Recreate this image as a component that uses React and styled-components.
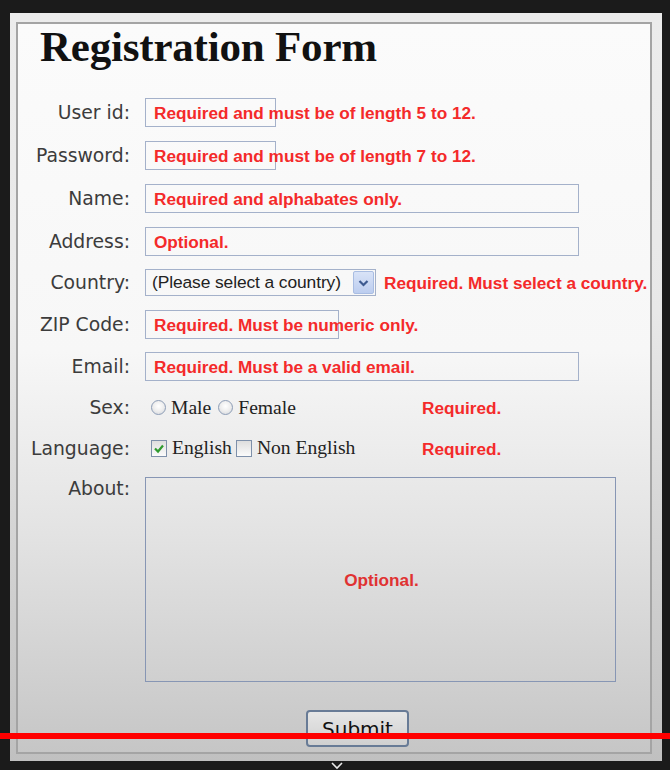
import React from "react";
import styled, { createGlobalStyle } from "styled-components";

const Global = createGlobalStyle`
  html, body { margin: 0; padding: 0; background: #1b1b1b; }
  body { width: 670px; height: 770px; overflow: hidden; position: relative; }
`;

const Frame = styled.div`
  margin: 13px 0 0 10px;
  width: 652px;
  height: 748px;
  box-sizing: border-box;
  padding: 9px 10px 7px 6px;
  background: linear-gradient(to bottom, #ececec 0%, #e8e8e8 40%, #d4d4d4 70%, #c0c0c0 100%);
`;

const Panel = styled.div`
  height: 100%;
  box-sizing: border-box;
  border: 2px solid #a4a4a4;
  background: linear-gradient(to bottom, #fbfbfb 0%, #f7f7f7 45%, #e3e3e3 70%, #c6c6c6 100%);
  display: flex;
  flex-direction: column;
`;

const Title = styled.h1`
  margin: 1px 0 0 22px;
  font-family: "Liberation Serif", "Times New Roman", serif;
  font-weight: bold;
  font-size: 43px;
  line-height: 43px;
  color: #111;
  letter-spacing: -0.2px;
`;

const Rows = styled.div`
  margin-top: 23px;
  display: flex;
  flex-direction: column;
`;

const Row = styled.div`
  display: grid;
  grid-template-columns: 112px 1fr;
  column-gap: 15px;
  align-items: ${(p) => (p.$top ? "start" : "center")};
  height: ${(p) => (p.$h ? `${p.$h}px` : "auto")};
  margin-top: ${(p) => p.$mt || 0}px;
`;

const Label = styled.div`
  text-align: right;
  font-family: "DejaVu Sans", Verdana, sans-serif;
  font-size: 18.8px;
  color: #3c3c3c;
  white-space: nowrap;
`;

const Hint = styled.span`
  font-family: "Liberation Sans", Arial, sans-serif;
  font-weight: bold;
  font-size: 17.2px;
  color: ${(p) => p.$color || "#f42a2a"};
  white-space: nowrap;
  position: relative;
  top: 1px;
`;

const InputBox = styled.div`
  width: ${(p) => p.$w}px;
  height: 29px;
  box-sizing: border-box;
  border: 1px solid #a4b1ca;
  padding-left: 8px;
  display: flex;
  align-items: center;
  overflow: visible;
`;

const Inline = styled.div`
  display: flex;
  align-items: center;
  gap: ${(p) => p.$gap || 0}px;
`;

const SelectBox = styled.div`
  width: 231px;
  height: 27px;
  box-sizing: border-box;
  border: 1px solid #a4b1ca;
  display: flex;
  align-items: center;
  justify-content: space-between;
  padding: 0 1px 0 6px;
  font-family: "Liberation Sans", Arial, sans-serif;
  font-size: 17.4px;
  letter-spacing: -0.1px;
  color: #222;
  white-space: nowrap;
`;

const DropButton = styled.span`
  width: 21px;
  height: 23px;
  box-sizing: border-box;
  border: 1px solid #a9bde2;
  border-radius: 2px;
  background: linear-gradient(to bottom, #d9e3f7, #bccdef);
  display: flex;
  align-items: center;
  justify-content: center;
  flex: none;
`;

const Options = styled.div`
  width: 277px;
  box-sizing: border-box;
  padding-left: 6px;
  display: flex;
  align-items: center;
`;

const OptionText = styled.span`
  font-family: "Liberation Serif", "Times New Roman", serif;
  font-size: 19.6px;
  color: #222;
  margin: 0 ${(p) => p.$mr || 0}px 0 5px;
`;

const Radio = styled.span`
  width: 15px;
  height: 15px;
  box-sizing: border-box;
  border-radius: 50%;
  border: 1.5px solid #8d9db6;
  background: radial-gradient(circle at 50% 40%, #ffffff 0%, #eeeeee 50%, #cfd3da 100%);
  flex: none;
`;

const Check = styled.span`
  width: 16px;
  height: 17px;
  box-sizing: border-box;
  border: 1.5px solid #7e90aa;
  background: linear-gradient(to bottom, #dedede, #fbfbfb);
  display: flex;
  align-items: center;
  justify-content: center;
  flex: none;
`;

const AboutLabel = styled(Label)`
  padding-top: 1px;
`;

const TextArea = styled.div`
  width: 471px;
  height: 205px;
  box-sizing: border-box;
  border: 1px solid #8796b4;
  display: flex;
  align-items: center;
  justify-content: center;
  padding-left: 2px;
`;

const ButtonRow = styled.div`
  margin-top: 28px;
  padding-left: 288px;
`;

const SubmitButton = styled.button`
  width: 103px;
  height: 37px;
  box-sizing: border-box;
  border: 2px solid #687b96;
  border-radius: 4px;
  background: linear-gradient(to bottom, #e6e6e6, #d0d0d0);
  font-family: "DejaVu Sans", Verdana, sans-serif;
  font-size: 20px;
  color: #111;
  padding: 0;
`;

const ProgressBar = styled.div`
  position: absolute;
  left: 0;
  top: 733px;
  width: 670px;
  height: 6px;
  background: #ff0000;
`;

const CloseMark = styled.svg`
  position: absolute;
  left: 330px;
  top: 762px;
`;

const Chevron = () => (
  <svg width="11" height="8" viewBox="0 0 11 8">
    <path d="M1.5 2 L5.5 6 L9.5 2" fill="none" stroke="#3d5a90" strokeWidth="2.2" />
  </svg>
);

const CheckMark = () => (
  <svg width="12" height="11" viewBox="0 0 12 11">
    <path d="M2 5.5 L5 8.5 L10 2.5" fill="none" stroke="#2f9a2f" strokeWidth="2.2" />
  </svg>
);

const textRows = [
  { label: "User id:", w: 131, h: 43, hint: "Required and must be of length 5 to 12." },
  { label: "Password:", w: 131, h: 43, hint: "Required and must be of length 7 to 12." },
  { label: "Name:", w: 434, h: 43, hint: "Required and alphabates only." },
  { label: "Address:", w: 434, h: 42, hint: "Optional." },
];

export default function App() {
  return (
    <>
      <Global />
      <Frame>
        <Panel>
          <Title>Registration Form</Title>
          <Rows>
            {textRows.map((r) => (
              <Row key={r.label} $h={r.h}>
                <Label>{r.label}</Label>
                <InputBox $w={r.w}>
                  <Hint>{r.hint}</Hint>
                </InputBox>
              </Row>
            ))}
            <Row $h={41}>
              <Label>Country:</Label>
              <Inline $gap={8}>
                <SelectBox>
                  <span>(Please select a country)</span>
                  <DropButton>
                    <Chevron />
                  </DropButton>
                </SelectBox>
                <Hint>Required. Must select a country.</Hint>
              </Inline>
            </Row>
            <Row $h={42}>
              <Label>ZIP Code:</Label>
              <InputBox $w={194}>
                <Hint>Required. Must be numeric only.</Hint>
              </InputBox>
            </Row>
            <Row $h={42}>
              <Label>Email:</Label>
              <InputBox $w={434}>
                <Hint>Required. Must be a valid email.</Hint>
              </InputBox>
            </Row>
            <Row $h={41}>
              <Label>Sex:</Label>
              <Inline>
                <Options>
                  <Radio />
                  <OptionText $mr={7}>Male</OptionText>
                  <Radio />
                  <OptionText>Female</OptionText>
                </Options>
                <Hint>Required.</Hint>
              </Inline>
            </Row>
            <Row $h={40}>
              <Label>Language:</Label>
              <Inline>
                <Options>
                  <Check>
                    <CheckMark />
                  </Check>
                  <OptionText $mr={4}>English</OptionText>
                  <Check />
                  <OptionText>Non English</OptionText>
                </Options>
                <Hint>Required.</Hint>
              </Inline>
            </Row>
            <Row $top $mt={9}>
              <AboutLabel>About:</AboutLabel>
              <TextArea>
                <Hint $color="#e03232">Optional.</Hint>
              </TextArea>
            </Row>
            <ButtonRow>
              <SubmitButton>Submit</SubmitButton>
            </ButtonRow>
          </Rows>
        </Panel>
      </Frame>
      <ProgressBar />
      <CloseMark width="14" height="8" viewBox="0 0 14 8">
        <path d="M2 1 L7 6 L12 1" fill="none" stroke="#e8e8e8" strokeWidth="1.6" />
      </CloseMark>
    </>
  );
}
